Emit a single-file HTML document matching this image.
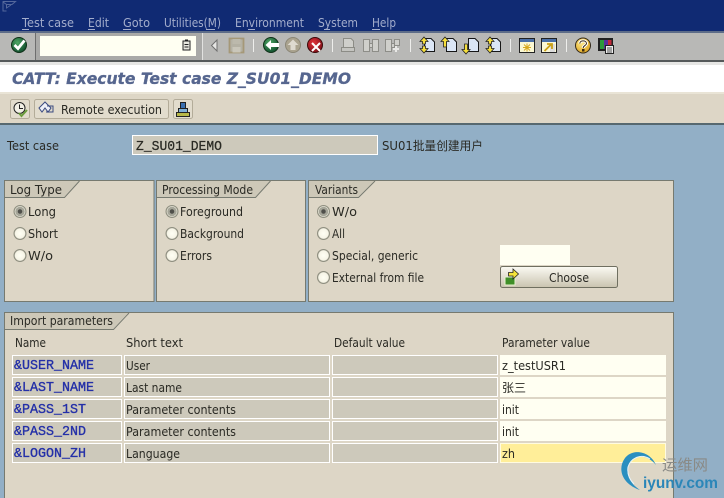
<!DOCTYPE html>
<html><head><meta charset="utf-8"><style>
html,body{margin:0;padding:0;background:#92afc6}
svg{display:block}
text{font-family:"DejaVu Sans","Noto Sans CJK SC",sans-serif;font-size:12px;fill:#2a2a24}
.m{fill:#a3adcc}
.c{font-family:"Liberation Mono","Noto Sans CJK SC",monospace;font-size:14px;stroke:#2a2a24;stroke-width:.25px}
.b{fill:#2430a8;stroke:#2430a8;stroke-width:.35px}
.z{font-family:"Noto Sans CJK SC",sans-serif}
</style></head><body>
<svg width="724" height="498" viewBox="0 0 724 498" xmlns="http://www.w3.org/2000/svg">
<defs>
<linearGradient id="btn" x1="0" y1="0" x2="0" y2="1"><stop offset="0" stop-color="#fbfaf3"/><stop offset="1" stop-color="#c9c3af"/></linearGradient>
<radialGradient id="g" cx=".4" cy=".35" r=".7"><stop offset="0" stop-color="#4fa765"/><stop offset="1" stop-color="#0d4a2a"/></radialGradient>
<radialGradient id="r" cx=".4" cy=".35" r=".7"><stop offset="0" stop-color="#e2333a"/><stop offset="1" stop-color="#7c0d16"/></radialGradient>
<radialGradient id="rad" cx=".5" cy=".5" r=".5"><stop offset="0" stop-color="#fffff4"/><stop offset=".8" stop-color="#f6f4e6"/><stop offset="1" stop-color="#8f8f80"/></radialGradient>
<radialGradient id="yel" cx=".4" cy=".35" r=".7"><stop offset="0" stop-color="#fde98a"/><stop offset="1" stop-color="#dca21e"/></radialGradient>
</defs>

<!-- backgrounds -->
<rect width="724" height="498" fill="#92afc6"/>
<rect width="724" height="32" fill="#102a73"/>
<rect y="31" width="724" height="2" fill="#5d6c88"/>
<rect y="33" width="724" height="27" fill="#b8b8b6"/>
<rect y="60" width="724" height="2" fill="#55595a"/>
<rect y="62" width="724" height="3" fill="#e6e6e4"/>
<rect y="65" width="724" height="27" fill="#fff"/>
<rect y="92" width="724" height="2" fill="#e9e4d6"/>
<rect y="94" width="724" height="29" fill="#ddd6c6"/>
<rect y="123" width="724" height="2" fill="#56686f"/>

<!-- menu -->
<path d="M3 1.500H15.500L12 4.500H6.500V8L11 5M6.500 4.500L3 2V11H6.500" fill="none" stroke="#55689c" stroke-width="1"/>
<text class="m" x="22" y="27" textLength="52" lengthAdjust="spacingAndGlyphs">Test case</text><rect x="22" y="29" width="7" height="1" fill="#a3adcc"/>
<text class="m" x="88" y="27" textLength="21" lengthAdjust="spacingAndGlyphs">Edit</text><rect x="88" y="29" width="7" height="1" fill="#a3adcc"/>
<text class="m" x="123" y="27" textLength="27" lengthAdjust="spacingAndGlyphs">Goto</text><rect x="123" y="29" width="8" height="1" fill="#a3adcc"/>
<text class="m" x="164" y="27" textLength="57" lengthAdjust="spacingAndGlyphs">Utilities(M)</text><rect x="206" y="29" width="9" height="1" fill="#a3adcc"/>
<text class="m" x="235" y="27" textLength="69" lengthAdjust="spacingAndGlyphs">Environment</text><rect x="248" y="29" width="7" height="1" fill="#a3adcc"/>
<text class="m" x="318" y="27" textLength="40" lengthAdjust="spacingAndGlyphs">System</text><rect x="324" y="29" width="6" height="1" fill="#a3adcc"/>
<text class="m" x="372" y="27" textLength="24" lengthAdjust="spacingAndGlyphs">Help</text><rect x="372" y="29" width="8" height="1" fill="#a3adcc"/>

<!-- system toolbar -->
<rect x="35" y="33" width="1" height="27" fill="#6e6e6e"/><rect x="36" y="33" width="166" height="27" fill="#a9a9a7"/><rect x="202" y="33" width="1" height="27" fill="#e2e2e0"/>
<rect x="40" y="36" width="156" height="20" fill="#fffff2"/>
<circle cx="19" cy="45" r="7.500" fill="url(#g)" stroke="#103018"/>
<path d="M14.500 45L18 48.500L24.500 40.500" fill="none" stroke="#fff" stroke-width="2.800"/>
<rect x="183" y="41" width="7" height="9" fill="#e8e8e0" stroke="#222"/><rect x="185" y="39.500" width="3" height="2" fill="#222"/><path d="M184.500 44.500h4M184.500 47h4" stroke="#222"/>
<!-- back triangle -->
<path d="M217 40V51L211.500 45.500Z" fill="#e6e6e4" stroke="#6f6f6f"/>
<!-- save -->
<path d="M229.500 38.500H243.500V52.500H229.500Z" fill="#b4b1a4" stroke="#a59878" stroke-width="1.800"/><rect x="232.500" y="39" width="8" height="5" fill="#bcb9ac"/><rect x="232.500" y="47" width="8" height="5.500" fill="#c9c6ba"/>
<rect x="253" y="39" width="1" height="13" fill="#eeeeec"/>
<!-- back green -->
<circle cx="271" cy="45" r="7.500" fill="url(#g)" stroke="#103018"/>
<path d="M265.500 45L271 40V43H279V47H271V50Z" fill="#fff"/>
<!-- up -->
<circle cx="293" cy="45" r="7.500" fill="#aaa38f" stroke="#8b8676"/>
<path d="M293 39.500L298.500 45H295.500V50H290.500V45H287.500Z" fill="#dedad0"/>
<!-- cancel -->
<circle cx="315" cy="45" r="7.500" fill="url(#r)" stroke="#3a0a0a"/>
<path d="M312 43L320 51M320 43L312 51" stroke="#fff" stroke-width="2"/>
<rect x="332" y="39" width="1" height="13" fill="#eeeeec"/>
<!-- print -->
<path d="M343.500 38.500H351L353.500 41V48H343.500Z" fill="#cfcfcb" stroke="#8c8c86"/><rect x="341.500" y="47.500" width="13" height="4" fill="#c4c4c0" stroke="#8c8c86"/>
<!-- find -->
<g fill="#cfcfcb" stroke="#8d8d88"><rect x="363.500" y="39.500" width="6" height="12"/><rect x="372.500" y="39.500" width="6" height="12"/><rect x="369.500" y="43.500" width="3" height="4"/></g>
<g fill="#cfcfcb" stroke="#8d8d88"><rect x="385.500" y="39.500" width="6" height="12"/><rect x="394.500" y="39.500" width="5" height="6"/><rect x="391.500" y="43.500" width="3" height="4"/></g>
<path d="M396 46v6M393 49h6" stroke="#e8e8e6" stroke-width="2"/>
<rect x="410" y="39" width="1" height="13" fill="#eeeeec"/>
<!-- page icons -->
<g fill="#dbe6f5" stroke="#161616">
<path d="M424.500 38.500H431L434.500 42V51.500H424.500Z"/>
<path d="M446.500 38.500H453L456.500 42V51.500H446.500Z"/>
<path d="M468.500 38.500H475L478.500 42V51.500H468.500Z"/>
<path d="M490.500 38.500H497L500.500 42V51.500H490.500Z"/>
</g>
<g fill="#f6df3c" stroke="#222" stroke-width=".8">
<path d="M424 37L428 41.500H425.500V44H422.500V41.500H420Z"/><path d="M424 53L428 48.500H425.500V46H422.500V48.500H420Z"/>
<path d="M445 37L449 41.500H446.500V47H443.500V41.500H441Z"/>
<path d="M466 54L470 49.500H467.500V44H464.500V49.500H462Z"/>
<path d="M490 37L494 41.500H491.500V44H488.500V41.500H486Z"/><path d="M490 53L494 48.500H491.500V46H488.500V48.500H486Z"/>
</g>
<rect x="510" y="39" width="1" height="13" fill="#eeeeec"/>
<!-- window icons -->
<rect x="519.500" y="38.500" width="15" height="14" fill="#fbf8d4" stroke="#222"/><rect x="520" y="39" width="14" height="3" fill="#4a6fa8"/>
<path d="M527 43.500V51.500M523 47.500H531M524 44.500L530 50.500M530 44.500L524 50.500" stroke="#d8a91e" stroke-width="1"/>
<rect x="541.500" y="38.500" width="15" height="14" fill="#fbf8d4" stroke="#222"/><rect x="542" y="39" width="14" height="3" fill="#4a6fa8"/><rect x="550" y="44" width="5" height="8" fill="#ddd"/>
<path d="M544.500 51L551 44.500M547 44H552V49" fill="none" stroke="#caa017" stroke-width="1.800"/>
<rect x="566" y="39" width="1" height="13" fill="#eeeeec"/>
<!-- help -->
<circle cx="583" cy="45.500" r="7.500" fill="url(#yel)" stroke="#33291a"/>
<path d="M579.800 43.500C579.800 40 586.500 40 586.500 43.500C586.500 45.500 583.200 45.500 583.200 48" fill="none" stroke="#fff" stroke-width="3"/>
<path d="M579.800 43.500C579.800 40 586.500 40 586.500 43.500C586.500 45.500 583.200 45.500 583.200 48" fill="none" stroke="#3a2a10" stroke-width="1"/>
<rect x="582" y="49" width="2.500" height="2.500" fill="#3a2a10"/>
<!-- layout -->
<rect x="598.500" y="38.500" width="14" height="12" fill="#222" stroke="#222"/>
<rect x="600" y="40" width="4" height="9" fill="#2c9a3c"/><rect x="604" y="40" width="4" height="9" fill="#5a2f9a"/><rect x="608" y="40" width="3.500" height="9" fill="#c22a3a"/>
<rect x="605.500" y="45.500" width="8" height="8" fill="#eee" stroke="#222"/><path d="M607 48h5M607 50h5M607 52h5" stroke="#222" stroke-width=".8"/>

<!-- title -->
<text x="12" y="84" textLength="339" lengthAdjust="spacingAndGlyphs" style="font-family:'DejaVu Sans',sans-serif;font-weight:bold;font-style:italic;font-size:16px;fill:#56668f;stroke:#56668f;stroke-width:.3px">CATT: Execute Test case Z_SU01_DEMO</text>

<!-- application toolbar -->
<g fill="#e2dccd" stroke="#b3ac99"><rect x="10.500" y="99.500" width="19" height="19" rx="2"/><rect x="34.500" y="99.500" width="134" height="19" rx="2"/><rect x="173.500" y="99.500" width="19" height="19" rx="2"/></g>
<circle cx="19.500" cy="108" r="5.500" fill="#f2f0e6" stroke="#222"/><path d="M19.500 104.500V108.500H23" fill="none" stroke="#222"/>
<path d="M19 113L21.500 116L27 110" fill="none" stroke="#6a9c3c" stroke-width="2"/>
<path d="M39 108L45 102L51 108L48 112L45 108L42 112Z" fill="#eef0f8" stroke="#3a4a80"/>
<path d="M47 106H53V112H46" fill="none" stroke="#3a4a80"/>
<text x="61" y="114" textLength="101" lengthAdjust="spacingAndGlyphs">Remote execution</text>
<rect x="176.500" y="112.500" width="13" height="4" fill="#b8b848" stroke="#222"/><rect x="178.500" y="108.500" width="9" height="4" fill="#7fb0d8" stroke="#222"/><rect x="180.500" y="102.500" width="5" height="6" fill="#3a6fb0" stroke="#222"/>

<!-- test case -->
<text x="7" y="150" textLength="52" lengthAdjust="spacingAndGlyphs">Test case</text>
<rect x="132.500" y="135.500" width="245" height="19" fill="#cdc9bb" stroke="#fff"/>
<text class="c" x="136" y="150" textLength="86" lengthAdjust="spacingAndGlyphs">Z_SU01_DEMO</text>
<text x="382" y="150" textLength="101" lengthAdjust="spacingAndGlyphs">SU01<tspan class="z">批量创建用户</tspan></text>

<!-- groups -->
<g fill="#ddd6c6" stroke="#767a70">
<rect x="4.500" y="180.500" width="149.500" height="121"/>
<rect x="156.500" y="180.500" width="149" height="121"/>
<rect x="308.500" y="180.500" width="365" height="121"/>
<rect x="4.500" y="312.500" width="669" height="200"/>
</g>
<path d="M5 181H79L64 197H5Z" fill="#cdc8b8"/>
<path d="M157 181H270L255 197H157Z" fill="#cdc8b8"/>
<path d="M309 181H374L358 197H309Z" fill="#cdc8b8"/>
<path d="M5 313H128L113 329H5Z" fill="#cdc8b8"/>
<g fill="none" stroke="#767a70">
<path d="M5 197.500H64.500L79.500 181"/>
<path d="M157 197.500H255.500L270.500 181"/>
<path d="M309 197.500H358.500L375 181"/>
<path d="M5 329.500H113.500L129 313"/>
</g>
<text x="10" y="194" textLength="52" lengthAdjust="spacingAndGlyphs">Log Type</text>
<text x="162" y="194" textLength="91" lengthAdjust="spacingAndGlyphs">Processing Mode</text>
<text x="315" y="194" textLength="43" lengthAdjust="spacingAndGlyphs">Variants</text>
<text x="10" y="325" textLength="103" lengthAdjust="spacingAndGlyphs">Import parameters</text>

<!-- radios -->
<g fill="url(#rad)" stroke="#8f8f80">
<circle cx="20" cy="211.500" r="6"/><circle cx="20" cy="233.500" r="6"/><circle cx="20" cy="255.500" r="6"/>
<circle cx="172" cy="211.500" r="6"/><circle cx="172" cy="233.500" r="6"/><circle cx="172" cy="255.500" r="6"/>
<circle cx="323.500" cy="211.500" r="6"/><circle cx="323.500" cy="233.500" r="6"/><circle cx="323.500" cy="255.500" r="6"/><circle cx="323.500" cy="277.500" r="6"/>
</g>
<g fill="#4f4f4a" stroke="#a5a598" stroke-width="2.500"><circle cx="20" cy="211.500" r="3.500"/><circle cx="172" cy="211.500" r="3.500"/><circle cx="323.500" cy="211.500" r="3.500"/></g>
<text x="28" y="216" textLength="28" lengthAdjust="spacingAndGlyphs">Long</text>
<text x="28" y="238" textLength="30" lengthAdjust="spacingAndGlyphs">Short</text>
<text x="28" y="260" textLength="25" lengthAdjust="spacingAndGlyphs">W/o</text>
<text x="180" y="216" textLength="63" lengthAdjust="spacingAndGlyphs">Foreground</text>
<text x="180" y="238" textLength="64" lengthAdjust="spacingAndGlyphs">Background</text>
<text x="180" y="260" textLength="32" lengthAdjust="spacingAndGlyphs">Errors</text>
<text x="332" y="216" textLength="25" lengthAdjust="spacingAndGlyphs">W/o</text>
<text x="332" y="238" textLength="13" lengthAdjust="spacingAndGlyphs">All</text>
<text x="332" y="260" textLength="86" lengthAdjust="spacingAndGlyphs">Special, generic</text>
<text x="332" y="282" textLength="92" lengthAdjust="spacingAndGlyphs">External from file</text>

<rect x="500" y="245" width="70" height="20" fill="#fffff2"/>
<rect x="500.500" y="266.500" width="117" height="21" rx="2" fill="url(#btn)" stroke="#6f6f60"/>
<rect x="505" y="277" width="10" height="8" fill="#3f8f28" stroke="#e8f0d0"/>
<path d="M508.500 272.500H513V269L518.500 274L513 279V276H508.500Z" fill="#f4e33a" stroke="#222" stroke-width=".8"/>
<text x="549" y="282" textLength="40" lengthAdjust="spacingAndGlyphs">Choose</text>

<!-- table -->
<text x="15" y="347" textLength="31" lengthAdjust="spacingAndGlyphs">Name</text>
<text x="126" y="347" textLength="57" lengthAdjust="spacingAndGlyphs">Short text</text>
<text x="334" y="347" textLength="71" lengthAdjust="spacingAndGlyphs">Default value</text>
<text x="502" y="347" textLength="88" lengthAdjust="spacingAndGlyphs">Parameter value</text>

<g fill="#cdc9bb" stroke="#fff">
<rect x="12.500" y="355.500" width="109" height="19"/><rect x="124.500" y="355.500" width="205" height="19"/><rect x="332.500" y="355.500" width="165" height="19"/>
<rect x="12.500" y="377.500" width="109" height="19"/><rect x="124.500" y="377.500" width="205" height="19"/><rect x="332.500" y="377.500" width="165" height="19"/>
<rect x="12.500" y="399.500" width="109" height="19"/><rect x="124.500" y="399.500" width="205" height="19"/><rect x="332.500" y="399.500" width="165" height="19"/>
<rect x="12.500" y="421.500" width="109" height="19"/><rect x="124.500" y="421.500" width="205" height="19"/><rect x="332.500" y="421.500" width="165" height="19"/>
<rect x="12.500" y="443.500" width="109" height="19"/><rect x="124.500" y="443.500" width="205" height="19"/><rect x="332.500" y="443.500" width="165" height="19"/>
</g>
<g fill="#fffff2">
<rect x="500" y="355" width="166" height="20"/><rect x="500" y="377" width="166" height="20"/><rect x="500" y="399" width="166" height="20"/><rect x="500" y="421" width="166" height="20"/>
</g>
<rect x="500.500" y="443.500" width="165" height="19" fill="#ffee99" stroke="#fffbe0"/>

<text class="c b" x="14" y="369" textLength="80" lengthAdjust="spacingAndGlyphs">&amp;USER_NAME</text>
<text class="c b" x="14" y="391" textLength="80" lengthAdjust="spacingAndGlyphs">&amp;LAST_NAME</text>
<text class="c b" x="14" y="413" textLength="72" lengthAdjust="spacingAndGlyphs">&amp;PASS_1ST</text>
<text class="c b" x="14" y="435" textLength="72" lengthAdjust="spacingAndGlyphs">&amp;PASS_2ND</text>
<text class="c b" x="14" y="457" textLength="72" lengthAdjust="spacingAndGlyphs">&amp;LOGON_ZH</text>

<text x="126" y="370" textLength="24" lengthAdjust="spacingAndGlyphs">User</text>
<text x="126" y="392" textLength="56" lengthAdjust="spacingAndGlyphs">Last name</text>
<text x="126" y="414" textLength="110" lengthAdjust="spacingAndGlyphs">Parameter contents</text>
<text x="126" y="436" textLength="110" lengthAdjust="spacingAndGlyphs">Parameter contents</text>
<text x="126" y="458" textLength="54" lengthAdjust="spacingAndGlyphs">Language</text>

<text x="502" y="370" textLength="64" lengthAdjust="spacingAndGlyphs">z_testUSR1</text>
<text class="z" x="502" y="392" textLength="24" lengthAdjust="spacingAndGlyphs">张三</text>
<text x="502" y="414" textLength="17" lengthAdjust="spacingAndGlyphs">init</text>
<text x="502" y="436" textLength="17" lengthAdjust="spacingAndGlyphs">init</text>
<text x="502" y="458" textLength="13" lengthAdjust="spacingAndGlyphs">zh</text>

<!-- watermark -->
<path d="M656 465C650 451 633 448 625 458C617 469 622 484 640 490C629 483 624 471 630 462C636 454 648 455 656 465Z" fill="#2a8fc0"/>
<path d="M650 459C641 453 631 458 628 467C627 474 630 480 634 484" fill="none" stroke="#e8f4fa" stroke-width="1"/>
<text class="z" x="662" y="470" textLength="46" lengthAdjust="spacingAndGlyphs" style="font-size:15px;fill:#8a8a86">运维网</text>
<text x="643" y="488" textLength="75" lengthAdjust="spacingAndGlyphs" style="font-family:'Liberation Sans',sans-serif;font-size:15.500px;font-weight:bold;fill:#2b86b8">iyunv.com</text>
</svg>
</body></html>
